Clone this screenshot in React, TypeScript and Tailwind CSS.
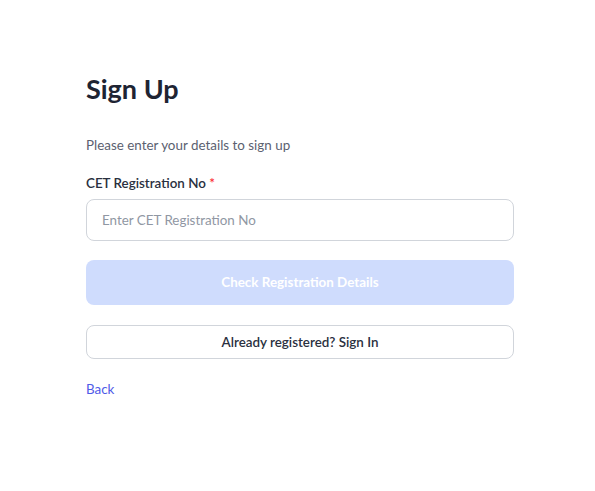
export default function App() {
  return (
    <div className="min-h-[491px] bg-white font-['Lato',sans-serif] text-[#1f2937]">
      <div className="w-[428px] ml-[86px] pt-[74px]">
        <h1 className="text-[27px] leading-[30px] font-bold text-[#1e2433]">Sign Up</h1>
        <p className="mt-[32px] text-[13.4px] leading-[18px] text-[#5b6170]">
          Please enter your details to sign up
        </p>
        <label className="block mt-[20px] text-[13.4px] leading-[18px] font-semibold text-[#2a3040]">
          CET Registration No <span className="text-red-500">*</span>
        </label>
        <input
          className="mt-[7px] w-full h-[42px] rounded-lg border border-[#d1d5db] px-[15px] text-[13.4px] outline-none placeholder:text-[#9097a3]"
          placeholder="Enter CET Registration No"
        />
        <button className="mt-[19px] w-full h-[45px] rounded-lg bg-[#cfdcfd] text-white text-[13.4px] font-bold">
          Check Registration Details
        </button>
        <button className="mt-[20px] w-full h-[34px] rounded-lg border border-[#d1d5db] bg-white text-[13.4px] font-semibold text-[#2a3040]">
          Already registered? Sign In
        </button>
        <div className="mt-[17px]">
          <a className="text-[13.4px] text-[#4f5be8]" href="#">Back</a>
        </div>
      </div>
    </div>
  );
}
